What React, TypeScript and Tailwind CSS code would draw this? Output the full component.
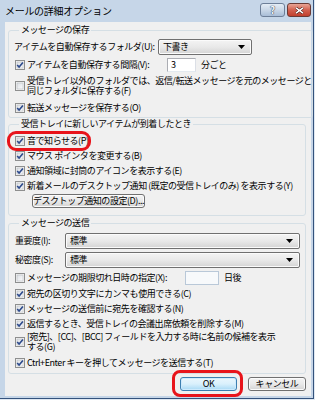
import React from "react";

const Check = ({ checked }: { checked: boolean }) => (
  <svg width="10" height="10" viewBox="0 0 10 10" className="shrink-0">
    <defs>
      <linearGradient id="cbg" x1="0" y1="0" x2="1" y2="1">
        <stop offset="0" stopColor="#dcdfe4" />
        <stop offset="1" stopColor="#fbfcfd" />
      </linearGradient>
    </defs>
    <rect x="0.5" y="0.5" width="9" height="9" fill="#f4f4f4" stroke="#8e8f8f" />
    <rect x="2" y="2" width="6" height="6" fill="url(#cbg)" stroke="#aeb3b9" strokeWidth="0.5" />
    {checked && (
      <path d="M2.2 4.9 L4.1 7.1 L7.9 2.4" stroke="#2d4a8c" strokeWidth="1.6" fill="none" />
    )}
  </svg>
);

const Arrow = () => (
  <svg width="7" height="4" viewBox="0 0 7 4" className="shrink-0">
    <path d="M0 0 H7 L3.5 4 Z" fill="#000" />
  </svg>
);

const Select = ({ value, w }: { value: string; w: string }) => (
  <div
    className={`${w} h-[16px] flex items-center justify-between pl-[4px] pr-[6px] border border-[#707070] rounded-[2px] bg-linear-to-b from-[#f4f4f4] via-[#e9e9e9] to-[#d4d4d4] shadow-[inset_0_0_0_1px_#fbfbfb]`}
  >
    <span>{value}</span>
    <Arrow />
  </div>
);

const Row = ({
  checked,
  children,
  h = "h-[15px]",
  extra = "",
}: {
  checked: boolean;
  children: React.ReactNode;
  h?: string;
  extra?: string;
}) => (
  <div className={`flex items-center gap-[2px] ${h} ${extra}`}>
    <Check checked={checked} />
    {children}
  </div>
);

const Legend = ({ children }: { children: React.ReactNode }) => (
  <legend className="ml-[4px] px-[2px] leading-[12px] h-[12px]">{children}</legend>
);

export default function App() {
  return (
    <div className="w-[315px] h-[400px] bg-[#dfe8f2] overflow-hidden font-['Noto_Sans_CJK_JP',sans-serif] text-black">
      <div className="w-[314px] h-[399px] bg-[#c6d6e8] border-r border-b border-[#34527c] flex flex-col">
        {/* title bar */}
        <div className="h-[22px] flex items-start shrink-0">
          <div className="pl-[5px] pt-[4px] text-[10px] leading-[14px] tracking-[-0.3px]">
            メールの詳細オプション
          </div>
          <div className="ml-auto mt-[3px] mr-[2px] flex gap-[2px]">
            <div className="w-[25px] h-[14px] rounded-[3px] border border-[#6d7f98] bg-linear-to-b from-[#e4edf6] via-[#c9d7e7] to-[#a9bdd6] flex items-center justify-center text-[10px] leading-none font-bold text-[#f4f7fb] [text-shadow:0_0_1px_#1d2f4a,0_0_1px_#1d2f4a]">
              ?
            </div>
            <div className="w-[24px] h-[14px] rounded-[3px] border border-[#6a3a35] bg-linear-to-b from-[#e7a597] via-[#d2604f] to-[#c13f2c] flex items-center justify-center">
              <svg width="9" height="7" viewBox="0 0 9 7">
                <path d="M1 0.8 L8 6.2 M8 0.8 L1 6.2" stroke="#3b1510" strokeWidth="2.6" />
                <path d="M1 0.8 L8 6.2 M8 0.8 L1 6.2" stroke="#ffffff" strokeWidth="1.5" />
              </svg>
            </div>
          </div>
        </div>

        {/* content */}
        <div className="ml-[5px] w-[306px] h-[374px] bg-[#f0f0f0] text-[9px] tracking-[-0.45px] leading-[12px] flex flex-col">
          {/* group 1 */}
          <fieldset className="mt-[2px] ml-[3px] mr-[5px] border border-[#d5dfe5] rounded-[3px] pl-[6px] pb-[2px]">
            <Legend>メッセージの保存</Legend>
            <div className="mt-[3px] h-[16px] flex items-center">
              <span className="ml-[-1px] w-[144px] whitespace-nowrap">アイテムを自動保存するフォルダ(U):</span>
              <Select value="下書き" w="w-[94px]" />
            </div>
            <Row checked h="h-[14px]" extra="mt-[3px]">
              <span className="w-[138px] whitespace-nowrap">アイテムを自動保存する間隔(V):</span>
              <div className="w-[29px] h-[14px] bg-white border border-[#abadb3] border-b-[#e3e9ef] border-r-[#dbdfe6] pl-[3px] leading-[12px]">3</div>
              <span className="ml-[3px]">分ごと</span>
            </Row>
            <Row checked={false} h="h-[20px]" extra="mt-[4px]">
              <span className="leading-[10px] whitespace-nowrap">
                受信トレイ以外のフォルダでは、返信/転送メッセージを元のメッセージと
                <br />
                同じフォルダに保存する(F)
              </span>
            </Row>
            <Row checked h="h-[14px]" extra="mt-[5px]">
              <span>転送メッセージを保存する(O)</span>
            </Row>
          </fieldset>

          {/* group 2 */}
          <fieldset className="ml-[3px] mr-[5px] border border-[#d5dfe5] rounded-[3px] pl-[6px] pb-[7px]">
            <Legend>受信トレイに新しいアイテムが到着したとき</Legend>
            <div className="relative mt-[3px]">
              <Row checked>
                <span>音で知らせる(P)</span>
              </Row>
              <div className="absolute left-[-8px] top-[-2px] w-[84px] h-[20px] border-[3px] border-[#e8141b] rounded-[9px]" />
            </div>
            <Row checked>
              <span>マウス ポインタを変更する(B)</span>
            </Row>
            <Row checked>
              <span>通知領域に封筒のアイコンを表示する(E)</span>
            </Row>
            <Row checked>
              <span className="whitespace-nowrap">新着メールのデスクトップ通知 (既定の受信トレイのみ) を表示する(Y)</span>
            </Row>
            <div className="mt-[1px] ml-[17px] w-[113px] h-[14px] border border-[#707070] rounded-[3px] bg-linear-to-b from-[#f4f4f4] via-[#e9e9e9] to-[#d4d4d4] shadow-[inset_0_0_0_1px_#fbfbfb] flex items-center justify-center whitespace-nowrap">
              デスクトップ通知の設定(D)...
            </div>
          </fieldset>

          {/* group 3 */}
          <fieldset className="mt-[1px] ml-[3px] mr-[5px] border border-[#d5dfe5] rounded-[3px] pl-[6px] pb-[3px]">
            <Legend>メッセージの送信</Legend>
            <div className="mt-[4px] h-[16px] flex items-center">
              <span className="w-[50px]">重要度(I):</span>
              <Select value="標準" w="w-[235px]" />
            </div>
            <div className="mt-[3px] h-[16px] flex items-center">
              <span className="w-[50px]">秘密度(S):</span>
              <Select value="標準" w="w-[235px]" />
            </div>
            <Row checked={false} extra="mt-[2px]">
              <span className="w-[156px] whitespace-nowrap">メッセージの期限切れ日時の指定(X):</span>
              <div className="w-[34px] h-[14px] bg-[#f7f9fb] border border-[#b9c8d8]" />
              <span className="ml-[3px]">日後</span>
            </Row>
            <Row checked extra="mt-[1px]">
              <span>宛先の区切り文字にカンマも使用できる(C)</span>
            </Row>
            <Row checked>
              <span>メッセージの送信前に宛先を確認する(N)</span>
            </Row>
            <Row checked>
              <span>返信するとき、受信トレイの会議出席依頼を削除する(M)</span>
            </Row>
            <Row checked h="h-[20px]" extra="mt-[1px]">
              <span className="leading-[10px] whitespace-nowrap">
                [宛先]、[CC]、[BCC] フィールドを入力する時に名前の候補を表示
                <br />
                する(G)
              </span>
            </Row>
            <Row checked extra="mt-[3px]">
              <span>Ctrl+Enter キーを押してメッセージを送信する(T)</span>
            </Row>
          </fieldset>

          {/* buttons */}
          <div className="mt-[3px] flex justify-end gap-[11px] pr-[5px]">
            <div className="relative">
              <div className="w-[57px] h-[14px] border border-[#3c7fb1] rounded-[3px] bg-linear-to-b from-[#eaf6fd] via-[#d9f0fc] to-[#a7d9f5] shadow-[inset_0_0_0_1px_#cdeafd] flex items-center justify-center">
                OK
              </div>
              <div className="absolute left-[-8px] top-[-7px] right-[-6px] bottom-[-6px] border-[3px] border-[#e8141b] rounded-[8px]" />
            </div>
            <div className="w-[58px] h-[14px] border border-[#707070] rounded-[3px] bg-linear-to-b from-[#f4f4f4] via-[#e9e9e9] to-[#d4d4d4] shadow-[inset_0_0_0_1px_#fbfbfb] flex items-center justify-center">
              キャンセル
            </div>
          </div>
        </div>
      </div>
    </div>
  );
}
